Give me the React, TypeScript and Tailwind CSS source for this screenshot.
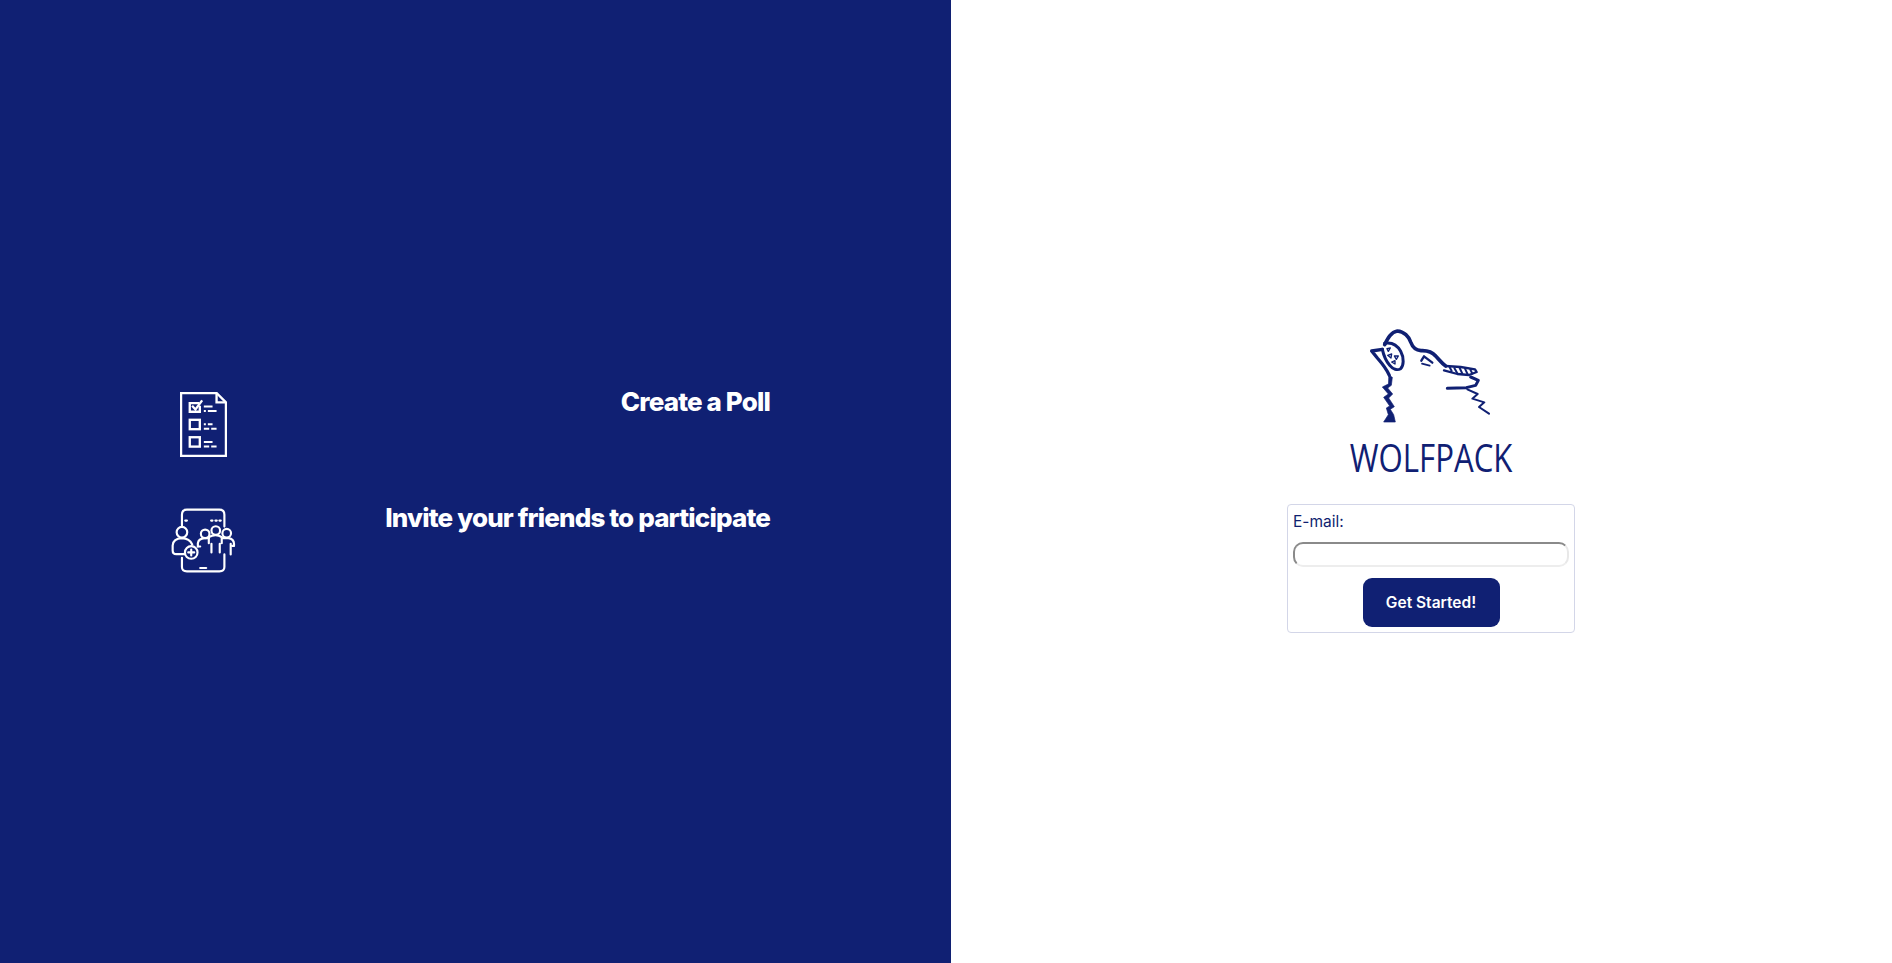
import React from 'react';

function PollIcon() {
  return (
    <svg width="47" height="65" viewBox="89 65 140 194" fill="none" stroke="#fff" strokeWidth="7">
      <path d="M92 68H198L226 96V256H92Z" />
      <path d="M198 68V96H226" />
      <path d="M146 98H118V124H148V106" />
      <path d="M125 106L135 117L155 90" />
      <path d="M160 108H186M160 122H166M172 122H198" strokeWidth="6" />
      <rect x="118" y="148" width="30" height="28" />
      <path d="M160 161H166M172 161H186M160 175H176M182 175H198" strokeWidth="6" />
      <rect x="118" y="200" width="30" height="28" />
      <path d="M160 214H186M160 228H176M182 228H198" strokeWidth="6" />
    </svg>
  );
}

function InviteIcon() {
  return (
    <svg width="67" height="65" viewBox="60 412 200 196" fill="none" stroke="#fff" strokeWidth="6.5" strokeLinecap="round">
      <path d="M95 465V432Q95 417 110 417H208Q223 417 223 432V468" />
      <path d="M95 562V590Q95 603 110 603H208Q223 603 223 590V552" />
      <path d="M150 593H168" />
      <path d="M105 450H110M183 450H187M196 450H200M208 450H212" />
      <circle cx="95" cy="485" r="16" />
      <path d="M104 551H78Q67 551 67 540V525Q68 505 95 503Q118 504 126 522" />
      <circle cx="123" cy="546" r="19" fill="#102073" />
      <path d="M123 537V555M114 546H132" />
      <circle cx="165" cy="490" r="13" />
      <circle cx="197" cy="480" r="13" />
      <circle cx="230" cy="488" r="13" />
      <path d="M143 528V518Q145 505 163 503H176" />
      <path d="M176 500Q197 488 215 500" />
      <path d="M176 500V518M184 520V546M215 500V518M209 520V546" />
      <path d="M218 503H235Q252 506 252 520V526M242 520V552" />
      <path d="M143 528H150M246 526H252" />
    </svg>
  );
}

function WolfLogo() {
  return (
    <svg width="124" height="95" viewBox="120 28 372 285" fill="none" stroke="#102073" strokeLinejoin="round" strokeLinecap="round">
      {/* top of the head and back */}
      <path d="M167 78C176 60 186 40 205 37C225 38 240 54 245 70C250 84 262 95 276 96C296 95 310 100 320 112C332 124 338 134 350 142" strokeWidth="11" />
      {/* mouth */}
      <path d="M167 74C190 70 205 80 215 98C226 118 224 142 215 150C205 156 192 152 182 140C172 128 165 115 160 92" strokeWidth="9" />
      <path d="M160 92L128 97L145 118C160 135 172 150 181 170" strokeWidth="10" />
      <path d="M174 90L184 88L178 98ZM176 110L188 106L186 118ZM196 112L208 112L202 122ZM188 130L198 126L198 136Z" strokeWidth="4" />
      {/* eye */}
      <path d="M277 126L285 113L310 132" strokeWidth="7" />
      <path d="M279 135L302 141" strokeWidth="5" />
      {/* right side band */}
      <path d="M350 142L395 145L438 152L443 160L420 169L385 166L345 155" strokeWidth="7" />
      <path d="M362 146L368 157M376 148L384 162M392 148L400 165M408 150L416 167M424 153L430 165" strokeWidth="6" />
      <path d="M425 175L448 185L440 200L412 207L355 209" strokeWidth="9" />
      <path d="M415 212L446 226L430 240L466 251L450 265L480 285" strokeWidth="6" />
      {/* neck */}
      <path d="M180 170L190 176L187 200L176 208L191 226L179 238L196 264L184 272L194 288L199 310H164L178 288L172 268L182 262L164 236L178 226L160 205L178 196Z" fill="#102073" strokeWidth="2" />
    </svg>
  );
}

export default function App() {
  return (
    <div className="flex h-screen w-full font-['Inter',sans-serif]">
      {/* Left panel */}
      <div className="flex w-[951px] flex-col justify-center gap-[51px] bg-[#102073] pt-[2px] pl-[170px]">
        <div className="flex h-[65px] w-[600px] items-start justify-between">
          <div className="flex w-[67px] justify-center">
            <PollIcon />
          </div>
          <h2 className="-mt-[5px] text-[26px] leading-[29px] font-extrabold tracking-[-0.85px] text-white">Create a Poll</h2>
        </div>
        <div className="flex h-[65px] w-[600px] items-start justify-between">
          <InviteIcon />
          <h2 className="-mt-[5px] text-[26px] leading-[29px] font-extrabold tracking-[-0.85px] text-white">Invite your friends to participate</h2>
        </div>
      </div>

      {/* Right panel */}
      <div className="flex flex-1 flex-col items-center justify-center bg-white pb-[3px] pl-[19px]">
        <WolfLogo />
        <div className="mt-[11px] origin-center scale-x-[0.82] text-[38px] leading-[46px] font-['Open_Sans',sans-serif] font-normal text-[#102073]">
          WOLFPACK
        </div>
        <form className="mt-[24px] flex h-[129px] w-[288px] flex-col rounded-[4px] border border-[#d3d6e8] px-[5px] pt-[7px]">
          <label className="text-[15.5px] leading-[20px] text-[#0f1f70]">E-mail:</label>
          <input
            type="text"
            className="mt-[10px] h-[25px] w-full rounded-[10px] border-2 border-t-[#8a8a8a] border-r-[#e8e8e8] border-b-[#ededed] border-l-[#8a8a8a] bg-white"
          />
          <button
            type="button"
            className="mx-auto mt-[11px] h-[49px] w-[137px] rounded-[9px] bg-[#102073] pt-[1px] text-[15.5px] font-semibold text-white"
          >
            Get Started!
          </button>
        </form>
      </div>
    </div>
  );
}
